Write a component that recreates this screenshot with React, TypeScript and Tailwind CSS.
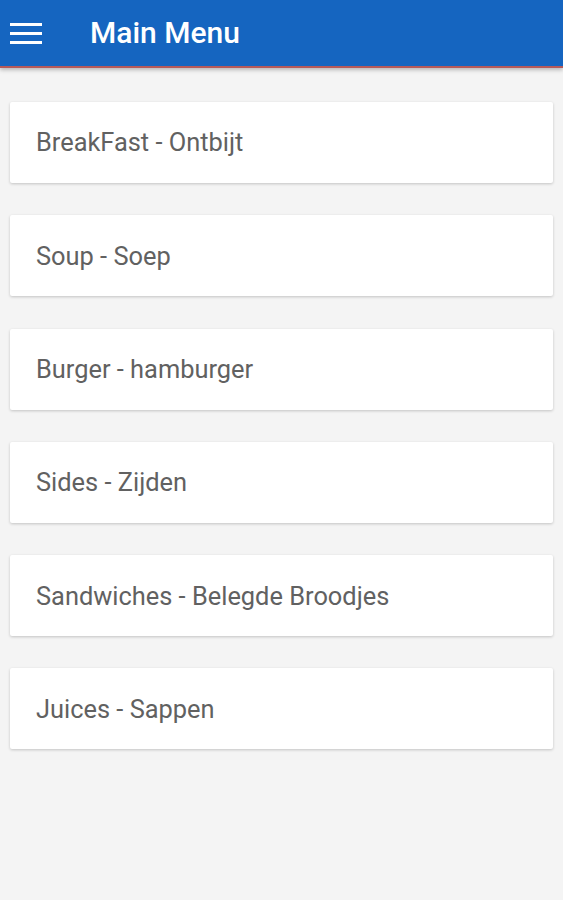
import React from "react";

const items = [
  "BreakFast - Ontbijt",
  "Soup - Soep",
  "Burger - hamburger",
  "Sides - Zijden",
  "Sandwiches - Belegde Broodjes",
  "Juices - Sappen",
];

export default function App() {
  return (
    <div className="min-h-[900px] w-[563px] bg-[#f4f4f4]" style={{ fontFamily: "Roboto, 'Noto Sans', sans-serif" }}>
      <header className="h-[68px] bg-[#1565c0] flex items-center border-b-2 border-[#b55a5a] shadow-[0_2px_4px_rgba(0,0,0,0.25)]">
        <div className="ml-[10px] w-[32px] flex flex-col gap-[6px]">
          <div className="h-[3px] bg-white" />
          <div className="h-[3px] bg-white" />
          <div className="h-[3px] bg-white" />
        </div>
        <h1 className="ml-[48px] text-white text-[30px] font-medium leading-none">Main Menu</h1>
      </header>
      <div className="px-[10px] pt-[34px] flex flex-col gap-[32.3px]">
        {items.map((t) => (
          <div key={t} className="h-[81px] bg-white flex items-center pl-[26px] shadow-[0_1px_3px_rgba(0,0,0,0.2)] rounded-[2px]">
            <span className="text-[#616161] text-[25.4px]">{t}</span>
          </div>
        ))}
      </div>
    </div>
  );
}
